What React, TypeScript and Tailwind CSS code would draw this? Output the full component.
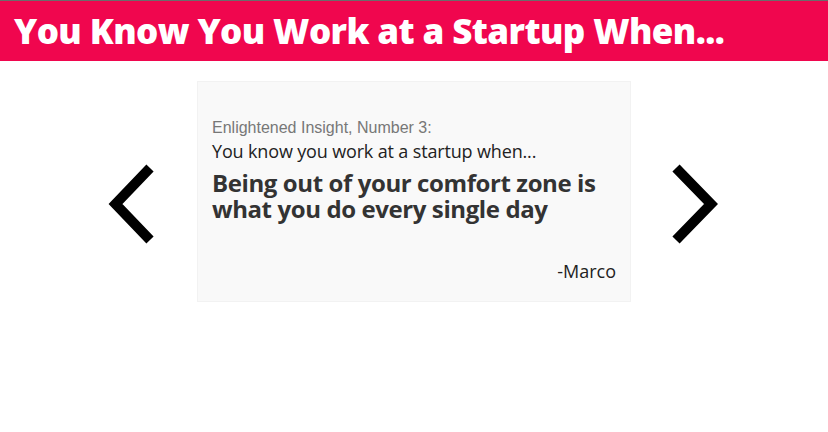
export default function App() {
  return (
    <div className="min-h-[432px] w-[828px] bg-white">
      <header className="h-[61px] border-t border-[#6b6b6b] bg-[#f0064e] px-[14px]">
        <h1 className="pt-[9px] font-['Open_Sans',sans-serif] text-[35px] font-extrabold leading-[42px] tracking-[-0.6px] text-white">
          You Know You Work at a Startup When...
        </h1>
      </header>

      <div className="mt-[20px] flex items-start justify-center gap-[41px]">
        <button className="mt-[83px] h-[80px] w-[48px]" aria-label="Previous">
          <svg width="48" height="80" viewBox="0 0 48 80">
            <polyline points="42,4 7.5,40 42,76" fill="none" stroke="#000" strokeWidth="10" strokeLinejoin="miter" />
          </svg>
        </button>

        <div className="h-[221px] w-[434px] border border-[#f2f2f2] bg-[#f9f9f9] px-[14px] pt-[36px]">
          <p className="font-['Liberation_Sans',sans-serif] text-[16px] leading-[20px] text-[#777]">
            Enlightened Insight, Number 3:
          </p>
          <p className="mt-[2px] font-['Open_Sans',sans-serif] text-[18px] leading-[22px] tracking-[-0.15px] text-[#222]">
            You know you work at a startup when...
          </p>
          <p className="mt-[8px] font-['Open_Sans',sans-serif] text-[24px] font-bold leading-[26px] tracking-[-0.4px] text-[#333]">
            Being out of your comfort zone is what you do every single day
          </p>
          <p className="mt-[38px] text-right font-['Open_Sans',sans-serif] text-[18px] leading-[22px] text-[#222]">
            -Marco
          </p>
        </div>

        <button className="mt-[83px] h-[80px] w-[48px]" aria-label="Next">
          <svg width="48" height="80" viewBox="0 0 48 80">
            <polyline points="4,4 39,40 4,76" fill="none" stroke="#000" strokeWidth="10" strokeLinejoin="miter" />
          </svg>
        </button>
      </div>
    </div>
  );
}
